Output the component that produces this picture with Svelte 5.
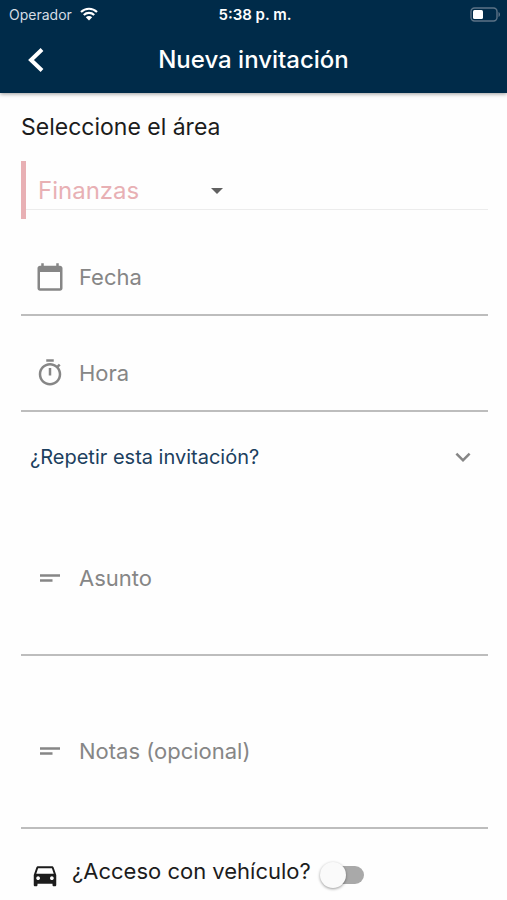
<script>
  let area = $state('Finanzas');
  let date = $state('');
  let time = $state('');
  let subject = $state('');
  let notes = $state('');
  let repeat = $state(false);
  let vehicle = $state(false);
</script>

{#snippet lines()}
  <svg class="icon" viewBox="0 0 24 24" aria-hidden="true"><path d="M4 9h16v2H4zm0 4h10v2H4z" /></svg>
{/snippet}

<div class="screen">
  <header>
    <div class="status">
      <div class="carrier">
        <span>Operador</span>
        <svg class="wifi" viewBox="0 0 18 14" aria-hidden="true">
          <path d="M1 5a11.5 11.5 0 0 1 16 0M3.8 8a7.4 7.4 0 0 1 10.4 0" fill="none" stroke="#fff" stroke-width="2.2" />
          <path d="M9 13.4 5.8 10.3a4.6 4.6 0 0 1 6.4 0z" fill="#fff" />
        </svg>
      </div>
      <span class="clock">5:38 p. m.</span>
      <svg class="battery" viewBox="0 0 31 15" aria-hidden="true">
        <rect x="1" y="1" width="26" height="13" rx="3.5" fill="none" stroke="#5c7387" stroke-width="1.4" />
        <rect x="3" y="3" width="10" height="9" rx="1.5" fill="#fff" />
        <path d="M28.5 5v5c2-.8 2-4.2 0-5z" fill="#5c7387" />
      </svg>
    </div>
    <div class="bar">
      <button class="back" type="button" aria-label="Volver">
        <svg viewBox="0 0 18 26" aria-hidden="true"><path d="M15 2.5 4 13l11 10.500" fill="none" stroke="#fff" stroke-width="4" /></svg>
      </button>
      <h1>Nueva invitación</h1>
    </div>
  </header>

  <form>
    <label class="heading" for="area">Seleccione el área</label>
    <div class="area">
      <div class="area-line">
        <select id="area" bind:value={area}>
          <option>Finanzas</option>
        </select>
        <svg class="caret" viewBox="0 0 12 6" aria-hidden="true"><path d="M0 0h12L6 6z" /></svg>
      </div>
    </div>

    <label class="field">
      <svg class="icon" viewBox="0 0 24 24" aria-hidden="true"><path d="M20 3h-1V1h-2v2H7V1H5v2H4c-1.1 0-2 .9-2 2v16c0 1.1.9 2 2 2h16c1.1 0 2-.9 2-2V5c0-1.1-.9-2-2-2zm0 18H4V8h16v13z" /></svg>
      <input type="text" placeholder="Fecha" aria-label="Fecha" bind:value={date} />
    </label>
    <label class="field">
      <svg class="icon" viewBox="0 0 24 24" aria-hidden="true"><path d="M15 1H9v2h6V1zm-4 13h2V8h-2v6zm8.03-6.61l1.42-1.42c-.43-.51-.9-.99-1.41-1.41l-1.42 1.42C16.07 4.74 14.12 4 12 4c-4.97 0-9 4.03-9 9s4.02 9 9 9 9-4.03 9-9c0-2.12-.74-4.07-1.97-5.61zM12 20c-3.87 0-7-3.13-7-7s3.13-7 7-7 7 3.13 7 7-3.13 7-7 7z" /></svg>
      <input type="text" placeholder="Hora" aria-label="Hora" bind:value={time} />
    </label>

    <button class="repeat" type="button" aria-expanded={repeat} onclick={() => (repeat = !repeat)}>
      <span>¿Repetir esta invitación?</span>
      <svg class="icon" viewBox="0 0 24 24" aria-hidden="true"><path d="M16.59 8.59L12 13.17 7.41 8.59 6 10l6 6 6-6z" /></svg>
    </button>

    <label class="field">
      {@render lines()}
      <textarea placeholder="Asunto" aria-label="Asunto" bind:value={subject}></textarea>
    </label>
    <label class="field">
      {@render lines()}
      <textarea placeholder="Notas (opcional)" aria-label="Notas (opcional)" bind:value={notes}></textarea>
    </label>

    <div class="vehicle">
      <svg class="icon car" viewBox="0 0 24 24" aria-hidden="true"><path d="M18.92 6.01C18.72 5.42 18.16 5 17.5 5h-11c-.66 0-1.21.42-1.42 1.01L3 12v8c0 .55.45 1 1 1h1c.55 0 1-.45 1-1v-1h12v1c0 .55.45 1 1 1h1c.55 0 1-.45 1-1v-8l-2.08-5.99zM6.5 16c-.83 0-1.5-.67-1.5-1.5S5.67 13 6.5 13s1.5.67 1.5 1.5S7.33 16 6.5 16zm11 0c-.83 0-1.5-.67-1.5-1.5s.67-1.5 1.5-1.5 1.5.67 1.5 1.5-.67 1.5-1.5 1.5zM5 11l1.5-4.5h11L19 11H5z" /></svg>
      <label for="vehicle">¿Acceso con vehículo?</label>
      <input id="vehicle" type="checkbox" role="switch" bind:checked={vehicle} />
    </div>
  </form>
</div>

<style>
  :global(body) {
    background: #fefefe;
  }
  .screen,
  input,
  select,
  textarea,
  button {
    font-family: Inter, 'Liberation Sans', sans-serif;
  }
  .screen {
    color: #1c1c1c;
  }
  svg {
    display: block;
    flex: none;
  }
  header {
    padding-bottom: 2px;
    background: #002b49;
    color: #fff;
    box-shadow: 0 1px 4px rgba(0, 0, 0, 0.4);
  }
  .status {
    display: grid;
    grid-template-columns: 1fr auto 1fr;
    align-items: center;
    height: 28px;
    padding: 0 6px 0 9px;
    font-size: 14px;
  }
  .carrier {
    display: flex;
    align-items: center;
    gap: 8px;
    color: #d5dde4;
  }
  .wifi {
    width: 18px;
    height: 14px;
  }
  .clock {
    font-size: 15px;
    font-weight: 600;
  }
  .battery {
    width: 31px;
    height: 15px;
    justify-self: end;
  }
  .bar {
    display: grid;
    grid-template-columns: 72px 1fr 72px;
    align-items: center;
    height: 63px;
  }
  .back {
    display: flex;
    justify-content: center;
    padding: 8px 0;
    border: 0;
    background: none;
  }
  .back svg {
    width: 18px;
    height: 26px;
  }
  h1 {
    margin: 0;
    font-size: 24px;
    font-weight: 500;
    line-height: 30px;
    text-align: center;
  }
  form {
    padding: 19px 19px 0 21px;
  }
  .heading {
    display: block;
    font-size: 23px;
    line-height: 30px;
  }
  .area {
    height: 58px;
    margin: 19px 0 20px;
    border-left: 5px solid #e8b0b4;
  }
  .area-line {
    display: flex;
    align-items: center;
    height: 48px;
    border-bottom: 1px solid #ececec;
    position: relative;
  }
  select {
    appearance: none;
    width: 200px;
    height: 48px;
    padding: 11px 0 0 12px;
    border: 0;
    background: none;
    color: #e8b0b4;
    font-size: 24px;
  }
  .caret {
    position: absolute;
    left: 185px;
    top: 27px;
    width: 12px;
    height: 6px;
    fill: #616161;
    pointer-events: none;
  }
  .field {
    display: flex;
    align-items: center;
    margin-bottom: 19px;
    padding-left: 14px;
    gap: 14px;
    border-bottom: 2px solid #bdbdbd;
  }
  .icon {
    width: 30px;
    height: 30px;
    fill: #868686;
  }
  input[type='text'],
  textarea {
    flex: 1;
    min-width: 0;
    box-sizing: border-box;
    padding: 0;
    border: 0;
    outline: 0;
    background: none;
    color: #1c1c1c;
    font-size: 22px;
    line-height: 30px;
  }
  input[type='text'] {
    height: 75px;
  }
  textarea {
    display: block;
    height: 152px;
    padding: 61px 0;
    resize: none;
    overflow: hidden;
  }
  ::placeholder {
    color: #868686;
    opacity: 1;
  }
  .repeat {
    display: flex;
    align-items: center;
    justify-content: space-between;
    width: 100%;
    height: 90px;
    margin-top: -19px;
    padding: 0 10px 0 9px;
    border: 0;
    background: none;
    color: #1c405e;
    font-size: 20px;
  }
  .vehicle {
    display: flex;
    align-items: center;
    height: 54px;
    padding-left: 9px;
  }
  .vehicle label {
    margin: 0 9px 0 12px;
    padding-bottom: 8px;
    font-size: 22px;
    line-height: 30px;
  }
  .car {
    fill: #1c1c1c;
  }
  input[type='checkbox'] {
    appearance: none;
    display: flex;
    align-items: center;
    width: 44px;
    height: 18px;
    margin: 0;
    border-radius: 9px;
    background: linear-gradient(90deg, transparent 9px, #a9a9a9 9px);
  }
  input[type='checkbox']::before {
    content: '';
    width: 26px;
    height: 26px;
    flex: none;
    border-radius: 50%;
    background: #fafafa;
    box-shadow: 0 1px 3px rgba(0, 0, 0, 0.4);
  }
  input[type='checkbox']:checked::before {
    margin-left: 18px;
  }
</style>
